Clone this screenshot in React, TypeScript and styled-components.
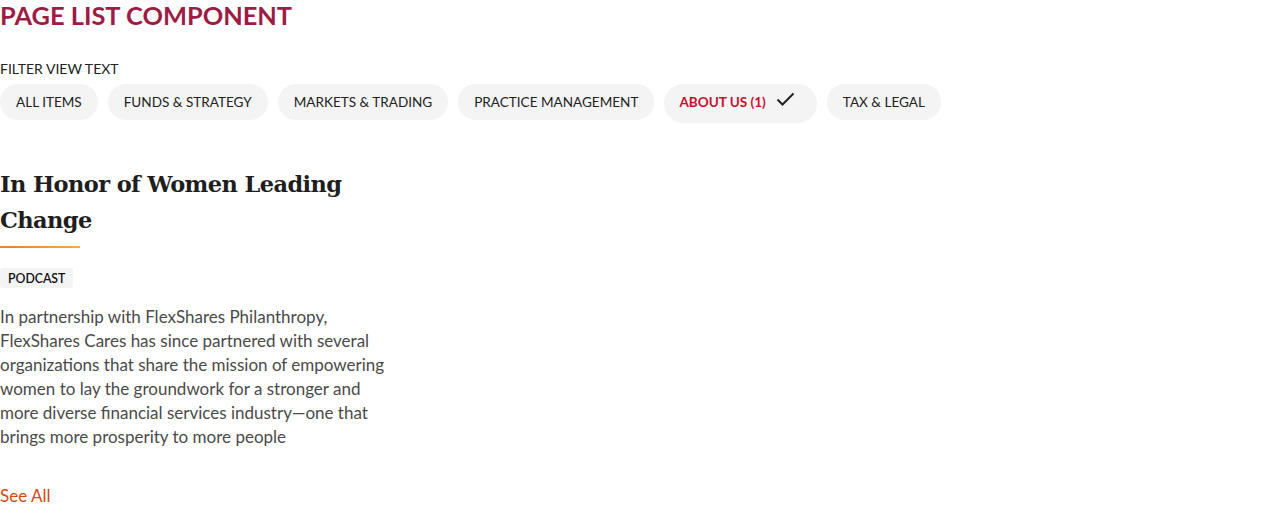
import React from "react";
import styled, { createGlobalStyle } from "styled-components";

const Global = createGlobalStyle`
  html, body { margin: 0; padding: 0; background: #fff; }
  body { font-family: Lato, "Open Sans", sans-serif; color: #222; }
`;

const Page = styled.div`
  display: flex;
  flex-direction: column;
  align-items: flex-start;
`;

const Title = styled.h1`
  margin: 0;
  padding-top: 1px;
  font-family: Lato, sans-serif;
  font-weight: 700;
  font-size: 25.4px;
  line-height: 28px;
  letter-spacing: 0;
  color: #9b1d45;
`;

const FilterLabel = styled.div`
  margin-top: 31px;
  font-size: 14px;
  line-height: 17px;
  color: #222;
`;

const PillRow = styled.div`
  display: flex;
  align-items: flex-start;
  gap: 10px;
  margin-top: 7px;
`;

const Pill = styled.button<{ $active?: boolean }>`
  display: flex;
  align-items: center;
  gap: 10px;
  height: ${(p) => (p.$active ? "39px" : "36px")};
  padding: ${(p) => (p.$active ? "0 22px 3px 15px" : "0 16px")};
  border: none;
  border-radius: 20px;
  background: #f4f4f4;
  font-family: Lato, sans-serif;
  font-size: 13.55px;
  font-weight: ${(p) => (p.$active ? 700 : 400)};
  color: ${(p) => (p.$active ? "#c8102e" : "#222")};
  cursor: pointer;
`;

const CheckMark = styled.svg`
  margin-bottom: 5px;
  flex: none;
`;

const Card = styled.article`
  margin-top: 43px;
  width: 395px;
  display: flex;
  flex-direction: column;
  align-items: flex-start;
`;

const Heading = styled.h2`
  margin: 0;
  font-family: "DejaVu Serif", serif;
  font-weight: 700;
  font-size: 22.5px;
  line-height: 36px;
  letter-spacing: -0.6px;
  color: #1e1e1e;
  width: 395px;
`;

const Rule = styled.div`
  margin-top: 8px;
  width: 80px;
  height: 2px;
  background: linear-gradient(90deg, #e67e3c, #f2ae3a);
`;

const Tag = styled.span`
  margin-top: 20px;
  padding: 0 8px;
  height: 20px;
  display: inline-flex;
  align-items: center;
  background: #f4f4f4;
  border-radius: 3px;
  font-size: 12.3px;
  font-weight: 600;
  color: #111;
`;

const Body = styled.p`
  margin: 17px 0 0;
  width: 392px;
  font-size: 17px;
  line-height: 24px;
  color: #4a4a4a;
`;

const SeeAll = styled.a`
  margin-top: 37px;
  font-size: 17px;
  line-height: 20px;
  color: #d4480f;
  text-decoration: none;
`;

const Check = () => (
  <CheckMark width="19" height="15" viewBox="0 0 19 15" fill="none">
    <path d="M1.5 7.5 L6.5 12.5 L17.5 1.5" stroke="#222" strokeWidth="2" />
  </CheckMark>
);

const filters = [
  "ALL ITEMS",
  "FUNDS & STRATEGY",
  "MARKETS & TRADING",
  "PRACTICE MANAGEMENT",
  "ABOUT US (1)",
  "TAX & LEGAL",
];

export default function App() {
  return (
    <Page>
      <Global />
      <Title>PAGE LIST COMPONENT</Title>
      <FilterLabel>FILTER VIEW TEXT</FilterLabel>
      <PillRow>
        {filters.map((f) => {
          const active = f.startsWith("ABOUT");
          return (
            <Pill key={f} $active={active}>
              {f}
              {active && <Check />}
            </Pill>
          );
        })}
      </PillRow>
      <Card>
        <Heading>In Honor of Women Leading Change</Heading>
        <Rule />
        <Tag>PODCAST</Tag>
        <Body>
          In partnership with FlexShares Philanthropy, FlexShares Cares has since
          partnered with several organizations that share the mission of
          empowering women to lay the groundwork for a stronger and more diverse
          financial services industry—one that brings more prosperity to more
          people
        </Body>
        <SeeAll href="#">See All</SeeAll>
      </Card>
    </Page>
  );
}
